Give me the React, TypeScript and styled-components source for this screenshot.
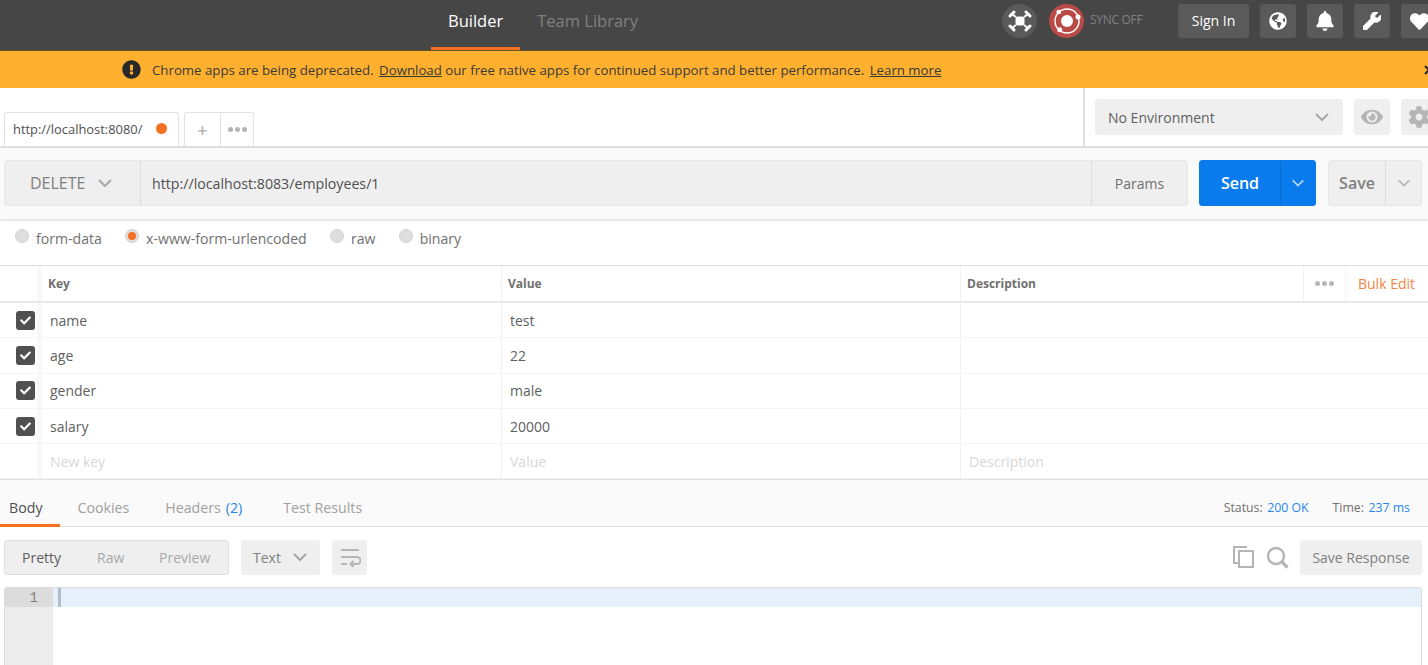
import { createGlobalStyle, styled } from "styled-components";
import {
  FaBell,
  FaCheck,
  FaCog,
  FaExclamationCircle,
  FaEye,
  FaGlobeAmericas,
  FaHeart,
  FaWrench,
} from "react-icons/fa";

const GlobalStyle = createGlobalStyle`
  html, body {
    margin: 0;
    padding: 0;
    background: #fff;
    overflow: hidden;
  }
  * {
    box-sizing: border-box;
  }
`;

const Page = styled.div`
  width: 1428px;
  height: 665px;
  overflow: hidden;
  font-family: "Open Sans", "Noto Sans", sans-serif;
  color: #505050;
  display: flex;
  flex-direction: column;
`;

const Header = styled.header`
  height: 51px;
  flex: none;
  background: #464646;
  border-bottom: 1px solid #5f5330;
  display: flex;
  align-items: flex-start;
  padding-left: 431px;
`;

const HeaderTab = styled.div<{ $active?: boolean }>`
  height: 50px;
  padding: 0 17px 7px;
  display: flex;
  align-items: center;
  font-size: 16.5px;
  color: ${(props) => (props.$active ? "#fff" : "#808080")};
  border-bottom: 3px solid
    ${(props) => (props.$active ? "#f47023" : "transparent")};
`;

const HeaderActions = styled.div`
  margin-left: auto;
  margin-right: -9px;
  padding-top: 4px;
  display: flex;
  align-items: center;
  flex: none;
`;

const RoundIcon = styled.div<{ $color: string }>`
  width: 35px;
  height: 34px;
  border-radius: 50%;
  background: ${(props) => props.$color};
  display: flex;
  align-items: center;
  justify-content: center;
  margin-right: 12px;
`;

const SyncLabel = styled.span`
  font-size: 12px;
  color: #808080;
  width: 53px;
  margin-left: -6px;
  margin-right: 35px;
  margin-top: -3px;
  white-space: nowrap;
  letter-spacing: -0.3px;
`;

const SignIn = styled.div`
  width: 71px;
  height: 34px;
  padding-bottom: 2px;
  border-radius: 3px;
  background: #5a5a5a;
  color: #fff;
  font-size: 14px;
  display: flex;
  align-items: center;
  justify-content: center;
  margin-right: 11px;
`;

const HeaderButton = styled.div<{ $size?: number; $heavy?: boolean }>`
  width: 36px;
  height: 34px;
  border-radius: 3px;
  background: #5a5a5a;
  color: #fff;
  font-size: ${(props) => props.$size ?? 18}px;
  display: flex;
  align-items: center;
  justify-content: center;
  margin-right: 11px;

  &:last-child {
    margin-right: 0;
  }

  svg {
    stroke: currentColor;
    stroke-width: ${(props) => (props.$heavy ? 30 : 0)}px;
  }
`;

const Banner = styled.div`
  height: 37px;
  flex: none;
  background: #ffb02e;
  display: flex;
  align-items: center;
  padding-left: 122px;
  font-size: 13.25px;
  color: #3a3a3a;
  position: relative;
`;

const BannerIcon = styled.span`
  font-size: 19px;
  color: #282828;
  display: flex;
  margin-right: 11px;
`;

const BannerLink = styled.span<{ $spaced?: boolean }>`
  text-decoration: underline;
  white-space: pre;
  margin-left: ${(props) => (props.$spaced ? "2px" : "0")};
`;

const BannerText = styled.span<{ $lead?: boolean }>`
  white-space: pre;
  padding-right: ${(props) => (props.$lead ? "2px" : "0")};
`;

const BannerClose = styled.span`
  position: absolute;
  left: 1424px;
  top: 14px;
  display: flex;
`;

const TabRow = styled.div`
  height: 60px;
  flex: none;
  background: #fff;
  border-bottom: 2px solid #e4e4e4;
  display: flex;
`;

const TabStrip = styled.div`
  width: 1083px;
  flex: none;
  padding: 24px 0 0 4px;
  display: flex;
  align-items: flex-end;
  gap: 5px;
`;

const RequestTab = styled.div`
  width: 175px;
  height: 34px;
  border: 1px solid #e2e2e2;
  border-bottom: none;
  border-radius: 3px 3px 0 0;
  padding: 0 0 2px 8px;
  display: flex;
  align-items: center;
  font-size: 12.9px;
  color: #505050;
`;

const TabDot = styled.span`
  width: 11px;
  height: 11px;
  border-radius: 50%;
  background: #f47023;
  margin-left: auto;
  margin-right: 11px;
`;

const TabTools = styled.div`
  width: 70px;
  height: 34px;
  border: 1px solid #e2e2e2;
  border-bottom: none;
  border-radius: 3px 3px 0 0;
  display: grid;
  grid-template-columns: 35px 1fr;
`;

const TabTool = styled.div`
  display: flex;
  align-items: center;
  justify-content: center;
  color: #b5b5b5;
  font-size: 18px;
  font-weight: 600;

  & + & {
    border-left: 1px solid #e2e2e2;
  }
`;

const Dots = styled.div`
  display: flex;
  gap: 2px;

  span {
    width: 5px;
    height: 5px;
    border-radius: 50%;
    background: #b5b5b5;
  }
`;

const EnvPanel = styled.div`
  flex: 1;
  border-left: 2px solid #e2e2e2;
  padding: 11px 0 0 10px;
  display: flex;
  align-items: flex-start;
  gap: 11px;
`;

const EnvSelect = styled.div`
  width: 248px;
  height: 36px;
  flex: none;
  border-radius: 3px;
  background: #efefef;
  display: flex;
  align-items: center;
  justify-content: space-between;
  padding: 0 13px;
  font-size: 14px;
  color: #606060;
`;

const EnvButton = styled.div`
  width: 36px;
  height: 36px;
  flex: none;
  border-radius: 3px;
  background: #efefef;
  color: #b5b5b5;
  font-size: 22px;
  display: flex;
  align-items: center;
  justify-content: center;
`;

const UrlBar = styled.div`
  height: 71px;
  flex: none;
  background: #fafafa;
  box-shadow: 0 1px 3px rgba(0, 0, 0, 0.18);
  padding: 12px 6px 0 4px;
  display: flex;
  align-items: flex-start;
  position: relative;
`;

const UrlGroup = styled.div`
  width: 1184px;
  height: 46px;
  flex: none;
  margin-right: -1px;
  background: #efefef;
  border: 1px solid #e6e6e6;
  border-radius: 3px;
  display: flex;
  align-items: stretch;
`;

const MethodSelect = styled.div`
  width: 136px;
  flex: none;
  border-right: 1px solid #dcdcdc;
  padding-left: 25px;
  display: flex;
  align-items: center;
  gap: 12px;
  font-size: 16px;
  color: #808080;
`;

const UrlValue = styled.div`
  flex: 1;
  display: flex;
  align-items: center;
  padding-left: 11px;
  font-size: 14.2px;
  color: #505050;
`;

const ParamsButton = styled.div`
  width: 96px;
  flex: none;
  border-left: 1px solid #dcdcdc;
  display: flex;
  align-items: center;
  justify-content: center;
  font-size: 14px;
  color: #707070;
`;

const SplitButton = styled.div<{ $primary?: boolean; $width: number; $caret: number }>`
  width: ${(props) => props.$width}px;
  height: 46px;
  flex: none;
  margin-left: 12px;
  border-radius: 3px;
  background: ${(props) => (props.$primary ? "#097bed" : "#efefef")};
  border: 1px solid ${(props) => (props.$primary ? "#097bed" : "#e6e6e6")};
  color: ${(props) => (props.$primary ? "#fff" : "#808080")};
  display: grid;
  grid-template-columns: 1fr ${(props) => props.$caret}px;
  font-size: 16px;
  font-weight: 600;
`;

const SplitLabel = styled.div`
  display: flex;
  align-items: center;
  justify-content: center;
`;

const SplitCaret = styled.div<{ $primary?: boolean }>`
  display: flex;
  align-items: center;
  justify-content: center;
  border-left: 1px solid ${(props) => (props.$primary ? "#0a6dd0" : "#dcdcdc")};
`;

const BodyTypes = styled.div`
  height: 46px;
  flex: none;
  margin-top: 1px;
  border-bottom: 1px solid #dedede;
  padding: 0 0 9px 15px;
  display: flex;
  align-items: center;
  gap: 23.2px;
`;

const BodyType = styled.label`
  display: flex;
  align-items: center;
  gap: 7px;
  font-size: 14.1px;
  color: #707070;
`;

const Radio = styled.span<{ $checked?: boolean }>`
  width: 14px;
  height: 14px;
  margin-top: -5px;
  border-radius: 50%;
  background: #dedede;
  border: 1px solid #d2d2d2;
  display: flex;
  align-items: center;
  justify-content: center;

  &::after {
    content: "";
    width: 8px;
    height: 8px;
    border-radius: 50%;
    background: ${(props) => (props.$checked ? "#f47023" : "transparent")};
  }
`;

const TableRow = styled.div<{ $head?: boolean }>`
  height: ${(props) => (props.$head ? "37px" : "35.3px")};
  flex: none;
  display: grid;
  grid-template-columns: 42px 459px 459px 1fr;
  border-bottom: ${(props) =>
    props.$head ? "2px solid #e8e8e8" : "1px solid #f4f4f4"};
`;

const CheckCell = styled.div`
  display: flex;
  align-items: center;
  justify-content: flex-start;
  padding-left: 16px;
  border-right: 5px solid #f8f8f8;
`;

const Checkbox = styled.span`
  width: 19px;
  height: 19px;
  border-radius: 3px;
  background: #505050;
  color: #fff;
  font-size: 11px;
  display: flex;
  align-items: center;
  justify-content: center;
`;

const Cell = styled.div<{ $head?: boolean; $ghost?: boolean }>`
  display: flex;
  align-items: center;
  padding-left: ${(props) => (props.$head ? "6px" : "8px")};
  font-size: ${(props) => (props.$head ? "12px" : "14px")};
  font-weight: ${(props) => (props.$head ? 700 : 400)};
  color: ${(props) =>
    props.$ghost ? "#d8d8d8" : props.$head ? "#707070" : "#606060"};

  & + & {
    border-left: 1px solid #f2f2f2;
  }
`;

const DescriptionHead = styled(Cell)`
  justify-content: space-between;
  padding-right: 13px;
`;

const HeadTools = styled.div`
  display: flex;
  align-items: center;
  gap: 12px;
  height: 100%;
`;

const MoreBox = styled.div`
  height: 100%;
  padding: 0 11px;
  border-left: 1px solid #f2f2f2;
  border-right: 1px solid #f2f2f2;
  display: flex;
  align-items: center;
`;

const BulkEdit = styled.span`
  font-size: 14px;
  font-weight: 400;
  color: #f47023;
  opacity: 0.85;
`;

const ResponseBar = styled.div`
  height: 47.5px;
  flex: none;
  background: #fafafa;
  border-top: 1px solid #e0e0e0;
  border-bottom: 1px solid #e2e2e2;
  display: flex;
  align-items: stretch;
`;

const ResponseTab = styled.div<{ $active?: boolean; $first?: boolean; $last?: boolean }>`
  padding: 11px ${(props) => (props.$first ? "17px" : "18px")} 0
    ${(props) => (props.$first ? "9px" : "18px")};
  margin-left: ${(props) => (props.$last ? "5px" : "0")};
  margin-bottom: -1px;
  display: flex;
  align-items: center;
  gap: 5px;
  font-size: 14.2px;
  color: ${(props) => (props.$active ? "#505050" : "#a0a0a0")};
  border-bottom: 3px solid
    ${(props) => (props.$active ? "#f47023" : "transparent")};
`;

const Accent = styled.span`
  color: #097bed;
  opacity: 0.9;
`;

const ResponseMeta = styled.div`
  margin-left: auto;
  padding: 8px 18px 0 0;
  display: flex;
  align-items: center;
  font-size: 12.3px;
  color: #707070;
`;

const MetaItem = styled.span`
  display: flex;
  gap: 4.5px;
  margin-left: 24px;
`;

const ToolRow = styled.div`
  height: 60px;
  flex: none;
  padding: 13px 6px 0 4px;
  display: flex;
  align-items: flex-start;
`;

const ViewGroup = styled.div`
  width: 225px;
  height: 35px;
  flex: none;
  background: #efefef;
  border: 1px solid #dedede;
  border-radius: 3px;
  padding-left: 17px;
  display: flex;
  align-items: center;
  font-size: 14px;
`;

const ViewOption = styled.span<{ $active?: boolean }>`
  color: ${(props) => (props.$active ? "#606060" : "#a8a8a8")};
  width: ${(props) => (props.$active ? "75px" : "62px")};
`;

const FormatSelect = styled.div`
  width: 79px;
  height: 35px;
  flex: none;
  margin-left: 12px;
  background: #efefef;
  border-radius: 3px;
  padding: 0 12px;
  display: flex;
  align-items: center;
  justify-content: space-between;
  font-size: 14px;
  color: #808080;
`;

const WrapButton = styled.div`
  width: 35px;
  height: 35px;
  flex: none;
  margin-left: 12px;
  background: #efefef;
  border-radius: 3px;
  display: flex;
  align-items: center;
  justify-content: center;
`;

const ToolIcons = styled.div`
  margin-left: auto;
  height: 35px;
  display: flex;
  align-items: center;
  gap: 12px;
`;

const SaveResponse = styled.div`
  width: 122px;
  height: 35px;
  flex: none;
  margin-left: 11px;
  background: #efefef;
  border-radius: 3px;
  display: flex;
  align-items: center;
  justify-content: center;
  font-size: 14px;
  color: #808080;
`;

const Editor = styled.div`
  flex: 1;
  margin: 0 6px 0 4px;
  border: 1px solid #dcdcdc;
  border-bottom: none;
  border-radius: 3px 3px 0 0;
  display: grid;
  grid-template-columns: 48px 1fr;
  min-height: 0;
`;

const Gutter = styled.div`
  background: #ececec;
`;

const GutterLine = styled.div`
  height: 19px;
  background: #dcdcdc;
  padding: 1px 15px 0 0;
  display: flex;
  align-items: center;
  justify-content: flex-end;
  font-family: "Liberation Mono", monospace;
  font-size: 14px;
  color: #808080;
`;

const ActiveLine = styled.div`
  height: 19px;
  background: #e6f0fb;
  padding-left: 5px;
`;

const Cursor = styled.div`
  width: 3px;
  height: 19px;
  background: #aebdcb;
`;

const Chevron = ({ color, size = 16 }: { color: string; size?: number }) => (
  <svg width={size} height={size} viewBox="0 0 16 16" fill="none">
    <path d="M2 5l6 6 6-6" stroke={color} strokeWidth="2" />
  </svg>
);

const InterceptorIcon = () => (
  <svg width="24" height="24" viewBox="0 0 24 24" fill="none">
    <rect x="7.5" y="7.5" width="9" height="9" rx="2.5" fill="#fff" />
    <g stroke="#fff" strokeWidth="2">
      <path d="M8 8L4 5M16 8l4-3M8 16l-4 3M16 16l4 3" />
    </g>
    <g stroke="#fff" strokeWidth="3" strokeLinecap="round">
      <path d="M2 7l4-4M18 3l4 4M2 17l4 4M18 21l4-4" />
    </g>
  </svg>
);

const SyncIcon = () => (
  <svg width="30" height="30" viewBox="0 0 30 30" fill="none">
    <circle cx="15" cy="15" r="12" stroke="#fff" strokeWidth="1.4" />
    <circle cx="15" cy="15" r="6" fill="#fff" />
    <circle cx="6.7" cy="6" r="2.3" fill="#fff" />
    <circle cx="26" cy="11" r="2.5" fill="#fff" />
    <circle cx="7.7" cy="23.7" r="2.5" fill="#fff" />
  </svg>
);

const WrapIcon = () => (
  <svg width="22" height="20" viewBox="0 0 22 20" fill="none" stroke="#b5b5b5" strokeWidth="2">
    <path d="M2 3h18M2 10h16a3.2 3.2 0 0 1 0 7h-5M2 17h6" />
    <path d="M14.5 14l-3 3 3 3" />
  </svg>
);

const CopyIcon = () => (
  <svg width="21" height="22" viewBox="0 0 21 22" fill="none" stroke="#b5b5b5" strokeWidth="2">
    <path d="M14 1H1v16h5" />
    <rect x="6" y="5" width="14" height="16" fill="#fff" />
  </svg>
);

const SearchIcon = () => (
  <svg width="23" height="23" viewBox="0 0 23 23" fill="none" stroke="#b5b5b5">
    <circle cx="10" cy="10" r="8" strokeWidth="2.4" />
    <path d="M16 16l5.5 5.5" strokeWidth="3.4" />
  </svg>
);

const CloseIcon = () => (
  <svg width="10" height="10" viewBox="0 0 10 10" fill="none" stroke="#282828" strokeWidth="2">
    <path d="M1 1l8 8M9 1l-8 8" />
  </svg>
);

const params = [
  { key: "name", value: "test" },
  { key: "age", value: "22" },
  { key: "gender", value: "male" },
  { key: "salary", value: "20000" },
];

const bodyTypes = ["form-data", "x-www-form-urlencoded", "raw", "binary"];

export default function App() {
  return (
    <Page>
      <GlobalStyle />
      <Header>
        <HeaderTab $active>Builder</HeaderTab>
        <HeaderTab>Team Library</HeaderTab>
        <HeaderActions>
          <RoundIcon $color="#5a5a5a">
            <InterceptorIcon />
          </RoundIcon>
          <RoundIcon $color="#b94a48">
            <SyncIcon />
          </RoundIcon>
          <SyncLabel>SYNC OFF</SyncLabel>
          <SignIn>Sign In</SignIn>
          <HeaderButton>
            <FaGlobeAmericas />
          </HeaderButton>
          <HeaderButton $size={20}>
            <FaBell />
          </HeaderButton>
          <HeaderButton $size={18} $heavy>
            <FaWrench />
          </HeaderButton>
          <HeaderButton $size={19}>
            <FaHeart />
          </HeaderButton>
        </HeaderActions>
      </Header>

      <Banner>
        <BannerIcon>
          <FaExclamationCircle />
        </BannerIcon>
        <BannerText $lead>Chrome apps are being deprecated. </BannerText>
        <BannerLink>Download</BannerLink>
        <BannerText> our free native apps for continued support and better performance. </BannerText>
        <BannerLink $spaced>Learn more</BannerLink>
        <BannerClose>
          <CloseIcon />
        </BannerClose>
      </Banner>

      <TabRow>
        <TabStrip>
          <RequestTab>
            http://localhost:8080/
            <TabDot />
          </RequestTab>
          <TabTools>
            <TabTool>+</TabTool>
            <TabTool>
              <Dots>
                <span />
                <span />
                <span />
              </Dots>
            </TabTool>
          </TabTools>
        </TabStrip>
        <EnvPanel>
          <EnvSelect>
            No Environment
            <Chevron color="#a8a8a8" />
          </EnvSelect>
          <EnvButton>
            <FaEye />
          </EnvButton>
          <EnvButton>
            <FaCog />
          </EnvButton>
        </EnvPanel>
      </TabRow>

      <UrlBar>
        <UrlGroup>
          <MethodSelect>
            DELETE
            <Chevron color="#a8a8a8" />
          </MethodSelect>
          <UrlValue>http://localhost:8083/employees/1</UrlValue>
          <ParamsButton>Params</ParamsButton>
        </UrlGroup>
        <SplitButton $primary $width={117} $caret={35}>
          <SplitLabel>Send</SplitLabel>
          <SplitCaret $primary>
            <Chevron color="#b8d6f5" size={14} />
          </SplitCaret>
        </SplitButton>
        <SplitButton $width={94} $caret={36}>
          <SplitLabel>Save</SplitLabel>
          <SplitCaret>
            <Chevron color="#b5b5b5" size={14} />
          </SplitCaret>
        </SplitButton>
      </UrlBar>

      <BodyTypes>
        {bodyTypes.map((type) => (
          <BodyType key={type}>
            <Radio $checked={type === "x-www-form-urlencoded"} />
            {type}
          </BodyType>
        ))}
      </BodyTypes>

      <TableRow $head>
        <CheckCell />
        <Cell $head>Key</Cell>
        <Cell $head>Value</Cell>
        <DescriptionHead $head>
          Description
          <HeadTools>
            <MoreBox>
              <Dots>
                <span />
                <span />
                <span />
              </Dots>
            </MoreBox>
            <BulkEdit>Bulk Edit</BulkEdit>
          </HeadTools>
        </DescriptionHead>
      </TableRow>
      {params.map((param) => (
        <TableRow key={param.key}>
          <CheckCell>
            <Checkbox>
              <FaCheck />
            </Checkbox>
          </CheckCell>
          <Cell>{param.key}</Cell>
          <Cell>{param.value}</Cell>
          <Cell />
        </TableRow>
      ))}
      <TableRow>
        <CheckCell />
        <Cell $ghost>New key</Cell>
        <Cell $ghost>Value</Cell>
        <Cell $ghost>Description</Cell>
      </TableRow>

      <ResponseBar>
        <ResponseTab $active $first>
          Body
        </ResponseTab>
        <ResponseTab>Cookies</ResponseTab>
        <ResponseTab>
          Headers <Accent>(2)</Accent>
        </ResponseTab>
        <ResponseTab $last>Test Results</ResponseTab>
        <ResponseMeta>
          <MetaItem>
            Status: <Accent>200 OK</Accent>
          </MetaItem>
          <MetaItem>
            Time: <Accent>237 ms</Accent>
          </MetaItem>
        </ResponseMeta>
      </ResponseBar>

      <ToolRow>
        <ViewGroup>
          <ViewOption $active>Pretty</ViewOption>
          <ViewOption>Raw</ViewOption>
          <ViewOption>Preview</ViewOption>
        </ViewGroup>
        <FormatSelect>
          Text
          <Chevron color="#a8a8a8" />
        </FormatSelect>
        <WrapButton>
          <WrapIcon />
        </WrapButton>
        <ToolIcons>
          <CopyIcon />
          <SearchIcon />
        </ToolIcons>
        <SaveResponse>Save Response</SaveResponse>
      </ToolRow>

      <Editor>
        <Gutter>
          <GutterLine>1</GutterLine>
        </Gutter>
        <ActiveLine>
          <Cursor />
        </ActiveLine>
      </Editor>
    </Page>
  );
}
